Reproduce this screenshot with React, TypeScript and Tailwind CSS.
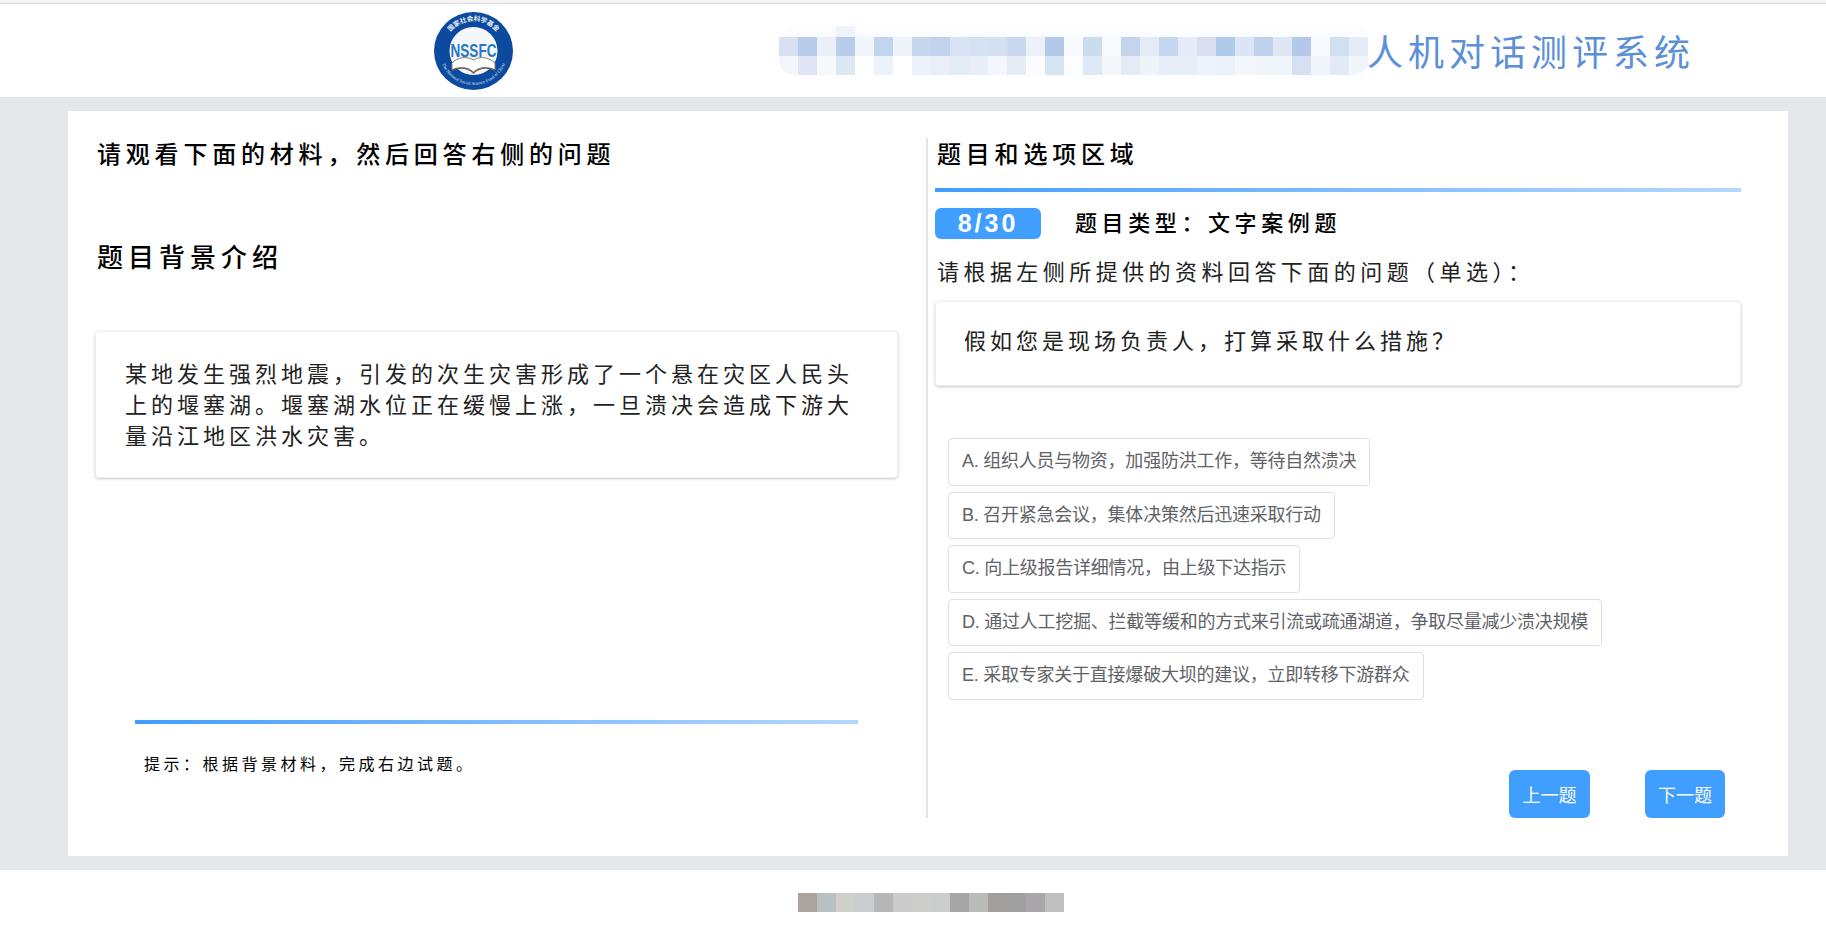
const rowA = ['#d7e1f2','#b8cdea','#e9f0fa','#b9cdea','#f1f5fc','#c3d5ee','#eff3fb','#c6d7ef','#c2d4ed','#d8e3f3','#d3e1f2','#d4dff0','#cad9f0','#ebf0f9','#b4c9e9','#f8fafd','#ccdcf0','#f8fafe','#c4d4ec','#e4ebf7','#c6d7ef','#e6ecf7','#d9dff0','#b0cbe9','#dce5f5','#bfd1ed','#dfe7f5','#b4c9e9','#f7fafe','#d0dff2','#e4edf7']
const rowB = ['#f3f7fc','#dfe5f5','#f5f9fc','#dce8f4','#ffffff','#ebf2fa','#ffffff','#edf1fa','#e9eef8','#e3ecf6','#e9edf8','#f3f6fc','#e5ecf8','#fbfcfe','#d7e4f3','#fcfdfe','#dfe9f6','#f3f6fb','#e5ebf5','#eff3fa','#e8eef8','#e8eef8','#eef2fa','#eaf1f9','#f3f6fb','#f2f5fa','#f1f5fc','#d5e0f1','#f0f4fb','#e3e9f6','#f2f6fb']
const footerRow = ['#aba39e','#b9c0c3','#cfcfcb','#c9cdcf','#b6b6b6','#cbcbcb','#cdcec9','#cbcdcd','#a6a6a6','#bbbbb9','#a29e9a','#9fa0a2','#a9a7aa','#c0c0be']

const options = [
  'A. 组织人员与物资，加强防洪工作，等待自然溃决',
  'B. 召开紧急会议，集体决策然后迅速采取行动',
  'C. 向上级报告详细情况，由上级下达指示',
  'D. 通过人工挖掘、拦截等缓和的方式来引流或疏通湖道，争取尽量减少溃决规模',
  'E. 采取专家关于直接爆破大坝的建议，立即转移下游群众',
]

function Logo() {
  return (
    <svg width="79" height="78" viewBox="0 0 79 78" className="shrink-0 overflow-visible">
      <defs>
        <path id="arcTop" d="M9.5 39 A30 30 0 0 1 69.5 39" />
        <path id="arcBottom" d="M5.5 39 A34 34 0 0 0 73.5 39" />
      </defs>
      <ellipse cx="39.5" cy="39" rx="39.5" ry="39" fill="#0b4a9e" />
      <circle cx="39.5" cy="39" r="24" fill="#f4f7fb" />
      <text fontSize="6.6" fontWeight="700" fill="#e8eef8" textAnchor="middle" fontFamily="'Noto Sans CJK SC', sans-serif">
        <textPath href="#arcTop" startOffset="50%">国家社会科学基金</textPath>
      </text>
      <text fontSize="4.6" fill="#dfe8f5" textAnchor="middle" fontFamily="'Liberation Serif', serif">
        <textPath href="#arcBottom" startOffset="50%">The National Social Science Fund of China</textPath>
      </text>
      <path d="M39.5 48 C33 44 24 45 18 51 L18 58 C26 54 34 55 39.5 60 C45 55 53 54 61 58 L61 51 C55 45 46 44 39.5 48Z" fill="#fff" stroke="#8a7f70" strokeWidth="1" />
      <path d="M18 58 C26 55 34 56 39.5 61 C45 56 53 55 61 58" fill="none" stroke="#6f6252" strokeWidth="1.4" />
      <text x="39.5" y="45" fontSize="19" fontWeight="700" fill="#2a78c2" textAnchor="middle" textLength="46" lengthAdjust="spacingAndGlyphs" fontFamily="'Liberation Sans', sans-serif">NSSFC</text>
    </svg>
  )
}

function HeaderMosaic() {
  return (
    <svg width="590" height="49" viewBox="0 0 590 49" className="shrink-0">
      <defs>
        <clipPath id="pill">
          <rect x="0" y="0" width="590" height="49" rx="15" />
        </clipPath>
      </defs>
      <g clipPath="url(#pill)">
        <rect x="0" y="0" width="590" height="11" fill="#fbfcfe" />
        <rect x="57" y="0" width="19" height="11" fill="#f0f3fb" />
        {rowA.map((c, i) => <rect key={i} x={i * 19} y="11" width="19" height="19" fill={c} />)}
        {rowB.map((c, i) => <rect key={i} x={i * 19} y="30" width="19" height="19" fill={c} />)}
      </g>
    </svg>
  )
}

export default function App() {
  return (
    <div className="h-[930px] overflow-hidden bg-[#e4e8eb] font-['Noto_Sans_CJK_SC',sans-serif] text-black">
      <div className="h-[4px] bg-[#f3f3f3] border-b border-[#d9d9d9]" />

      {/* header */}
      <div className="h-[93px] bg-white flex items-center pl-[434px]">
        <Logo />
        <div className="ml-[266px] flex items-center">
          <HeaderMosaic />
          <span className="-ml-[2px] text-[36px] leading-[44px] tracking-[5px] text-[#5b8fd8] -mt-[1px]">人机对话测评系统</span>
        </div>
      </div>

      {/* main */}
      <div className="ml-[68px] mr-[38px] mt-[14px] h-[745px] bg-white flex">
        <div className="w-[858px] shrink-0 pl-[27px] pr-[28px] pt-[26px]">
          <h2 className="pl-[2px] text-[24px] leading-[32px] tracking-[4.8px] font-medium">请观看下面的材料，然后回答右侧的问题</h2>
          <h3 className="mt-[69px] pl-[2px] text-[26px] leading-[36px] tracking-[5px] font-medium">题目背景介绍</h3>
          <div className="mt-[57px] h-[147px] rounded-[4px] border border-[#ebeef5] shadow-[0_1px_3px_rgba(0,0,0,0.22)] pl-[29px] pr-[40px] pt-[25px] text-[22px] leading-[31px] tracking-[4px] text-[#222]">
            某地发生强烈地震，引发的次生灾害形成了一个悬在灾区人民头上的堰塞湖。堰塞湖水位正在缓慢上涨，一旦溃决会造成下游大量沿江地区洪水灾害。
          </div>
          <div className="mt-[242px] ml-[40px] w-[723px] h-[4px] bg-gradient-to-r from-[#409eff] to-[#b3d8ff]" />
          <p className="mt-[27px] ml-[49px] text-[16px] leading-[24px] tracking-[3.5px]">提示：根据背景材料，完成右边试题。</p>
        </div>

        <div className="mt-[27px] h-[680px] w-[815px] shrink-0 border-l-2 border-[#e4e4e4] pl-[7px] flex flex-col">
          <h2 className="-mt-[1px] pl-[2px] text-[24px] leading-[32px] tracking-[4.8px] font-medium">题目和选项区域</h2>
          <div className="mt-[19px] w-[806px] h-[4px] bg-gradient-to-r from-[#409eff] to-[#b3d8ff]" />
          <div className="mt-[16px] flex items-center">
            <span className="w-[106px] h-[31px] rounded-[6px] bg-[#409eff] text-white text-center text-[25px] leading-[31px] tracking-[3px] font-['Liberation_Sans',sans-serif] font-bold">8/30</span>
            <span className="ml-[34px] -mt-[4px] text-[22px] leading-[31px] tracking-[4.6px] font-medium">题目类型：文字案例题</span>
          </div>
          <p className="mt-[15px] pl-[2px] text-[22px] leading-[32px] tracking-[4.45px] text-[#222] whitespace-nowrap">请根据左侧所提供的资料回答下面的问题（单选）：</p>
          <div className="mt-[15px] w-[806px] h-[85px] rounded-[4px] border border-[#ebeef5] shadow-[0_1px_3px_rgba(0,0,0,0.22)] pl-[28px] pb-[9px] flex items-center text-[22px] leading-[32px] tracking-[4px] text-[#222]">
            假如您是现场负责人，打算采取什么措施？
          </div>
          <div className="mt-[52px] pl-[13px] flex flex-col items-start gap-[6px]">
            {options.map((o) => (
              <div key={o} className="h-[47.5px] px-[13px] flex items-center rounded-[4px] border border-[#dcdfe6] text-[18px] tracking-[-0.24px] text-[#606266] font-['Liberation_Sans','Noto_Sans_CJK_SC',sans-serif] whitespace-nowrap">
                {o}
              </div>
            ))}
          </div>
          <div className="mt-auto flex justify-end pr-[16px] gap-[55px]">
            <button className="w-[81px] h-[48px] rounded-[6px] bg-[#409eff] text-white text-[18px]">上一题</button>
            <button className="w-[80px] h-[48px] rounded-[6px] bg-[#409eff] text-white text-[18px]">下一题</button>
          </div>
        </div>
      </div>

      {/* footer */}
      <div className="mt-[14px] h-[60px] bg-white pl-[798px] pt-[23px]">
        <svg width="266" height="19" viewBox="0 0 266 19" className="block">
          {footerRow.map((c, i) => <rect key={i} x={i * 19} y="0" width="19" height="19" fill={c} />)}
        </svg>
      </div>
    </div>
  )
}
